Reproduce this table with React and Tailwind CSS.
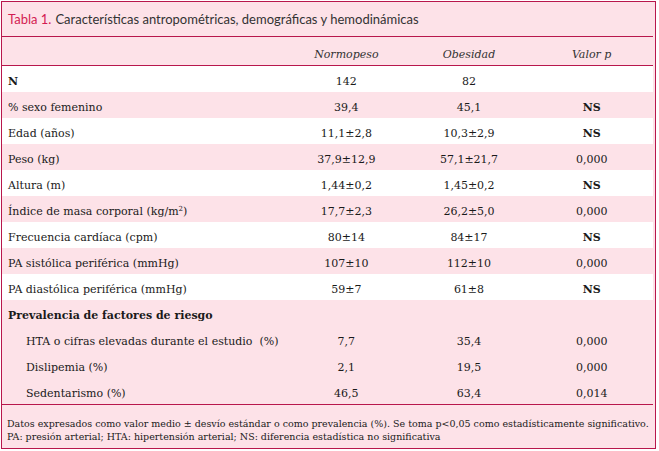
import React from "react"

const rows = [
    { label: "N", bold: true, a: "142", b: "82", p: "", white: true },
    { label: "% sexo femenino", a: "39,4", b: "45,1", p: "NS" },
    { label: "Edad (años)", a: "11,1±2,8", b: "10,3±2,9", p: "NS", white: true },
    { label: "Peso (kg)", a: "37,9±12,9", b: "57,1±21,7", p: "0,000" },
    { label: "Altura (m)", a: "1,44±0,2", b: "1,45±0,2", p: "NS", white: true },
    { label: "imc", a: "17,7±2,3", b: "26,2±5,0", p: "0,000" },
    { label: "Frecuencia cardíaca (cpm)", a: "80±14", b: "84±17", p: "NS", white: true },
    { label: "PA sistólica periférica (mmHg)", a: "107±10", b: "112±10", p: "0,000" },
    { label: "PA diastólica periférica (mmHg)", a: "59±7", b: "61±8", p: "NS", white: true },
    { label: "Prevalencia de factores de riesgo", bold: true, a: "", b: "", p: "" },
    { label: "HTA o cifras elevadas durante el estudio  (%)", indent: true, a: "7,7", b: "35,4", p: "0,000" },
    { label: "Dislipemia (%)", indent: true, a: "2,1", b: "19,5", p: "0,000" },
    { label: "Sedentarismo (%)", indent: true, a: "46,5", b: "63,4", p: "0,014" },
]

function Row({ r }) {
    const label = r.label === "imc"
        ? <span>Índice de masa corporal (kg/m<sup className="text-[7px]">2</sup>)</span>
        : r.label
    return (
        <div className={`grid grid-cols-[283px_1fr_1fr_1fr] h-[26px] items-end pb-[2px] text-[11px] text-[#1a1a1a] font-['DejaVu_Serif',serif] ${r.white ? "bg-white" : ""}`}>
            <div className={`${r.indent ? "pl-[24px]" : "pl-[6px]"} ${r.bold ? "font-bold" : ""} whitespace-pre`}>{label}</div>
            <div className="text-center">{r.a}</div>
            <div className="text-center">{r.b}</div>
            <div className={`text-center ${r.p === "NS" ? "font-bold" : ""}`}>{r.p}</div>
        </div>
    )
}

export default function App() {
    return (
        <div className="pt-[1px] pl-[1px]">
            <div className="w-[655px] h-[448px] border border-[#b8174c] bg-[#fde2e8] pr-[2px] flex flex-col font-['DejaVu_Serif',serif]">
                <div className="h-[35px] flex items-center pl-[6px] pt-[1px] border-b border-[#b8174c] text-[13px] text-[#333] font-['Lato',sans-serif]">
                    <span className="text-[#d31c52]">Tabla 1.</span>
                    <span className="ml-[4px]">Características antropométricas, demográficas y hemodinámicas</span>
                </div>
                <div className="grid grid-cols-[283px_1fr_1fr_1fr] h-[29px] items-end pb-[2px] border-b border-[#b8174c] text-[11px] italic text-[#333] font-['DejaVu_Serif',serif]">
                    <div></div>
                    <div className="text-center">Normopeso</div>
                    <div className="text-center">Obesidad</div>
                    <div className="text-center">Valor p</div>
                </div>
                <div className="border-b border-[#b8174c]">
                    {rows.map((r, i) => <Row key={i} r={r} />)}
                </div>
                <div className="flex-1 pl-[5px] pt-[12px] text-[9.5px] leading-[13px] text-[#1a1a1a] font-['DejaVu_Serif',serif]">
                    <div>Datos expresados como valor medio ± desvío estándar o como prevalencia (%). Se toma p&lt;0,05 como estadísticamente significativo.</div>
                    <div>PA: presión arterial; HTA: hipertensión arterial; NS: diferencia estadística no significativa</div>
                </div>
            </div>
        </div>
    )
}
